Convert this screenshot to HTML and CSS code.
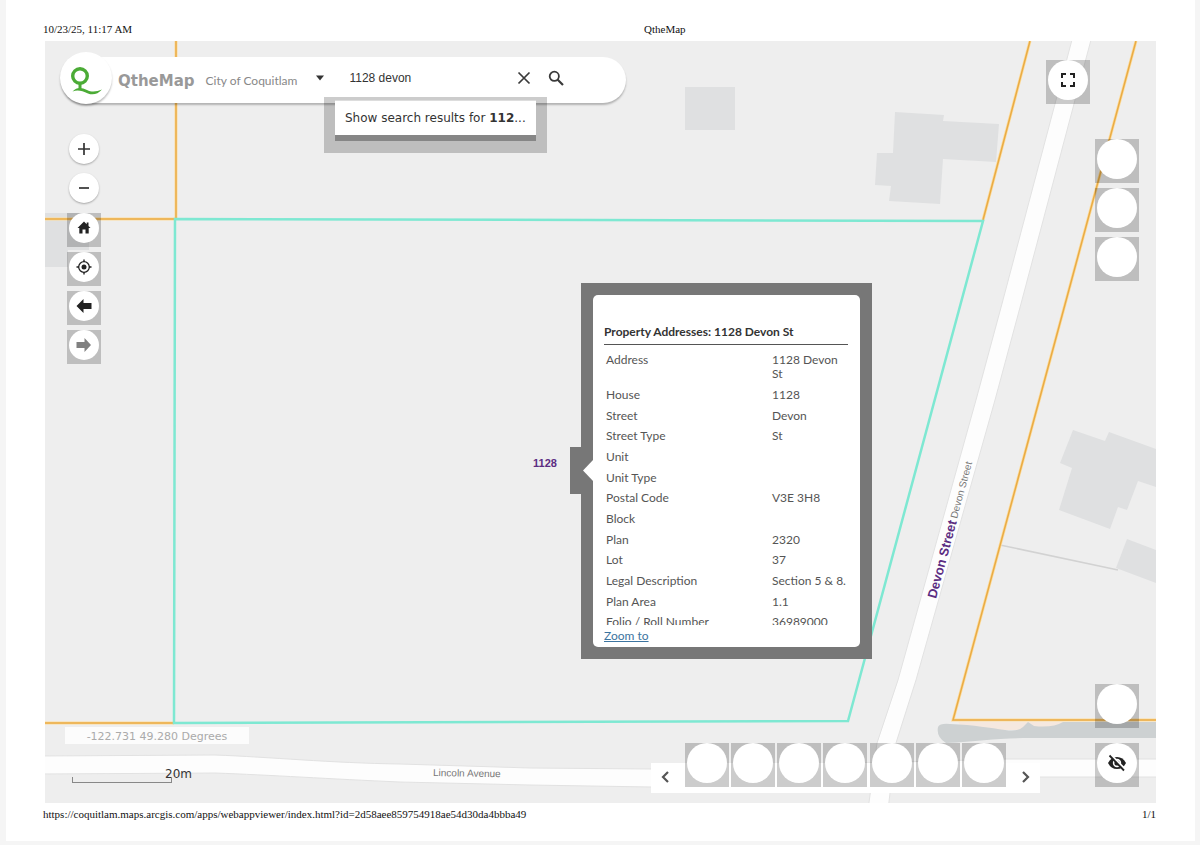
FILE: index.html
```html
<!DOCTYPE html>
<html lang="en">
<head>
<meta charset="utf-8">
<title>QtheMap</title>
<link rel="stylesheet" href="styles.css">
</head>
<body>
<div class="sheet">
  <header class="sheet-head">
    <span class="head-date">10/23/25, 11:17 AM</span>
    <span class="head-title">QtheMap</span>
  </header>

  <main class="map">
    <svg class="map-canvas" viewBox="45 41 1111 762" preserveAspectRatio="xMidYMid slice" role="img" aria-label="Parcel map around 1128 Devon Street">
      <g class="buildings">
        <path d="M685 87H735V130H685Z"/>
        <path d="M895 112L944 115L943 121L999 124L996 162L943 159L940 204L889 201L891 186L875 185L877 153L893 153Z"/>
        <path d="M45 213H89V250H68V267H45Z"/>
        <path d="M1073 430L1105 441L1109 432L1156 449V487L1138 481L1127 510L1118 507L1110 529L1059 510L1072 468L1060 463Z"/>
        <path d="M1127 539L1156 550V583L1116 568Z"/>
      </g>
      <path class="lot-edge" d="M1000 545L1118 570"/>
      <path class="road" d="M40 756L215 755C270 757 330 763 400 764L530 768L651 769L1006 759H1160V777H1006L651 787L530 785L400 782C330 779 270 775 215 773L40 774Z"/>
      <path class="road" d="M1073 36L1003 300L976 400L898 680L877 743L868 810H888L896 743L916 680L995 400L1022 300L1092 36Z"/>
      <path class="bank" d="M958 722H1064L1050 730H965Z"/>
      <path class="water" d="M938 727Q940 723 950 724C975 725 990 728 1005 730Q1018 732 1023 727L1028 722L1034 726Q1053 728 1063 722H1156V738H1030C1000 738 980 741 946 743Q936 737 938 727Z"/>
      <path class="parcel-halo" d="M176 41V218M45 219H175M45 723H174M1030 41L983 220M1136 41L953 720H1156"/>
      <path class="parcel" d="M176 41V218M45 219H175M45 723H174M1030 41L983 220M1136 41L953 720H1156"/>
      <path class="selected" d="M175 219L983 221L848 721L174 723Z"/>
      <text class="label-number" x="533" y="467">1128</text>
      <text class="label-street" transform="translate(936 599) rotate(-75)">Devon Street</text>
      <text class="label-minor" transform="translate(957 519) rotate(-75)">Devon Street</text>
      <text class="label-minor" transform="translate(433 776) rotate(1)">Lincoln Avenue</text>
    </svg>

    <form class="search-bar">
      <span class="logo">
        <svg viewBox="60 53 52 52" aria-hidden="true">
          <circle cx="80" cy="77" r="7.300" fill="none" stroke="#4bab36" stroke-width="3.400"/>
          <path d="M78.500 85H81.500V90H78.500Z" fill="#4bab36"/>
          <path d="M72.500 92.500C77 87.500 82 88.500 87 91C92 93.500 97 92.500 102 90.500C98 95 93 96.500 88 94.500C82 92 78 90.500 72.500 92.500Z" fill="#4bab36"/>
        </svg>
      </span>
      <h1 class="app-name">QtheMap</h1>
      <span class="app-owner">City of Coquitlam</span>
      <button class="bare source" type="button" aria-label="Choose search source">
        <svg width="10" height="6" viewBox="0 0 10 6"><path d="M1 0.500H9L5 5.500Z" fill="#333"/></svg>
      </button>
      <input class="query" type="text" value="1128 devon" aria-label="Find address or place">
      <button class="bare" type="button" aria-label="Clear search">
        <svg width="16" height="16" viewBox="0 0 16 16"><path d="M2.500 2.500L13.500 13.500M13.500 2.500L2.500 13.500" stroke="#3a3a3a" stroke-width="1.700"/></svg>
      </button>
      <button class="bare" type="submit" aria-label="Search">
        <svg width="16" height="16" viewBox="0 0 16 16"><circle cx="6.300" cy="6.300" r="4.600" fill="none" stroke="#3a3a3a" stroke-width="1.800"/><path d="M9.500 9.500L15 15" stroke="#3a3a3a" stroke-width="2.200"/></svg>
      </button>
    </form>

    <div class="suggest">
      <button class="suggest-item" type="button">Show search results for <b>112</b>...</button>
    </div>

    <div class="tools zoom-tools">
      <button class="round" type="button" aria-label="Zoom in"><svg width="14" height="14" viewBox="0 0 14 14"><path d="M7 1V13M1 7H13" stroke="#333" stroke-width="1.700"/></svg></button>
      <button class="round" type="button" aria-label="Zoom out"><svg width="14" height="14" viewBox="0 0 14 14"><path d="M2 7H12" stroke="#333" stroke-width="1.700"/></svg></button>
    </div>

    <div class="tools nav-tools">
      <button class="tile small" type="button" aria-label="Default extent"><span class="disc"><svg width="16" height="16" viewBox="0 0 16 16"><path d="M8 1.500L1.500 8H3.300V13.500H6.500V9.500H9.500V13.500H12.700V8H14.500L12.500 6V2.500H10.700V4.200Z" fill="#222"/></svg></span></button>
      <button class="tile small" type="button" aria-label="My location"><span class="disc"><svg width="16" height="16" viewBox="0 0 16 16"><circle cx="8" cy="8" r="5.300" fill="none" stroke="#222" stroke-width="1.300"/><circle cx="8" cy="8" r="2.500" fill="#222"/><path d="M8 0.500V3M8 13V15.500M0.500 8H3M13 8H15.500" stroke="#222" stroke-width="1.400"/></svg></span></button>
      <button class="tile small" type="button" aria-label="Previous extent"><span class="disc"><svg width="16" height="16" viewBox="0 0 16 16"><path d="M0.500 8L7.500 1V5H15.500V11H7.500V15Z" fill="#222"/></svg></span></button>
      <button class="tile small" type="button" aria-label="Next extent"><span class="disc"><svg width="16" height="16" viewBox="0 0 16 16"><path d="M15 8L8.500 1V5H0.500V11H8.500V15Z" fill="#808080"/></svg></span></button>
    </div>

    <div class="tools full-tools">
      <button class="tile" type="button" aria-label="Full screen"><span class="disc"><svg width="16" height="16" viewBox="0 0 16 16"><path d="M2 6V2H6M10 2H14V6M14 10V14H10M6 14H2V10" fill="none" stroke="#222" stroke-width="2"/></svg></span></button>
    </div>

    <div class="tools side-tools">
      <button class="tile" type="button" aria-label="Side widget 1"><span class="disc"></span></button>
      <button class="tile" type="button" aria-label="Side widget 2"><span class="disc"></span></button>
      <button class="tile" type="button" aria-label="Side widget 3"><span class="disc"></span></button>
    </div>

    <div class="tools corner-tools">
      <button class="tile" type="button" aria-label="Corner widget"><span class="disc"></span></button>
      <button class="tile" type="button" aria-label="Hide widgets"><span class="disc"><svg width="20" height="18" viewBox="0 0 20 18"><path d="M1 9Q4 3 10 3T19 9Q16 15 10 15T1 9Z" fill="#222"/><circle cx="10" cy="9" r="4.200" fill="#fff"/><circle cx="10" cy="9" r="2.600" fill="#222"/><path d="M3.500 0.500L18 15" stroke="#fff" stroke-width="2"/><path d="M2.500 1.500L17 16.500" stroke="#222" stroke-width="1.800"/></svg></span></button>
    </div>

    <div class="dock">
      <button class="bare step" type="button" aria-label="Previous widgets"><svg width="10" height="14" viewBox="0 0 10 14"><path d="M8 2L3 7L8 12" fill="none" stroke="#555" stroke-width="2.200"/></svg></button>
      <div class="dock-tiles">
        <button class="tile" type="button" aria-label="Widget 1"><span class="disc"></span></button>
        <button class="tile" type="button" aria-label="Widget 2"><span class="disc"></span></button>
        <button class="tile" type="button" aria-label="Widget 3"><span class="disc"></span></button>
        <button class="tile" type="button" aria-label="Widget 4"><span class="disc"></span></button>
        <button class="tile" type="button" aria-label="Widget 5"><span class="disc"></span></button>
        <button class="tile" type="button" aria-label="Widget 6"><span class="disc"></span></button>
        <button class="tile" type="button" aria-label="Widget 7"><span class="disc"></span></button>
      </div>
      <button class="bare step" type="button" aria-label="Next widgets"><svg width="10" height="14" viewBox="0 0 10 14"><path d="M2 2L7 7L2 12" fill="none" stroke="#555" stroke-width="2.200"/></svg></button>
    </div>

    <div class="coords">-122.731 49.280 Degrees</div>
    <div class="scale">
      <span class="scale-text">20m</span>
      <span class="scale-line"></span>
    </div>

    <section class="popup">
      <svg class="popup-arrow" width="24" height="47" viewBox="0 0 24 47" aria-hidden="true"><path d="M0 0H12V47H0Z" fill="#777"/><path d="M24 12V35L13 23.500Z" fill="#fff"/></svg>
      <div class="popup-card">
        <h2 class="popup-title">Property Addresses: 1128 Devon St</h2>
        <div class="popup-body">
          <table class="attrs">
            <tr><th scope="row">Address</th><td>1128 Devon St</td></tr>
            <tr><th scope="row">House</th><td>1128</td></tr>
            <tr><th scope="row">Street</th><td>Devon</td></tr>
            <tr><th scope="row">Street Type</th><td>St</td></tr>
            <tr><th scope="row">Unit</th><td></td></tr>
            <tr><th scope="row">Unit Type</th><td></td></tr>
            <tr><th scope="row">Postal Code</th><td>V3E 3H8</td></tr>
            <tr><th scope="row">Block</th><td></td></tr>
            <tr><th scope="row">Plan</th><td>2320</td></tr>
            <tr><th scope="row">Lot</th><td>37</td></tr>
            <tr><th scope="row">Legal Description</th><td>Section 5 &amp; 8.</td></tr>
            <tr><th scope="row">Plan Area</th><td>1.1</td></tr>
            <tr><th scope="row">Folio / Roll Number</th><td>36989000</td></tr>
          </table>
        </div>
        <a class="popup-link" href="#zoom">Zoom to</a>
      </div>
    </section>
  </main>

  <footer class="sheet-foot">
    <span>https://coquitlam.maps.arcgis.com/apps/webappviewer/index.html?id=2d58aee859754918ae54d30da4bbba49</span>
    <span>1/1</span>
  </footer>
</div>
</body>
</html>
```
FILE: styles.css
```css
* { box-sizing: border-box; }

body {
  margin: 0;
  padding: 0 5px 4px 6px;
  min-height: 100vh;
  display: flex;
  background: #f5f5f5;
  font-family: "Liberation Sans", Arial, sans-serif;
  color: #333;
}

button, input { font: inherit; color: inherit; }
button { padding: 0; border: 0; background: none; cursor: pointer; }
svg { display: block; }

.sheet {
  flex: 1;
  display: flex;
  flex-direction: column;
  padding: 0 39px;
  background: #fff;
}

.sheet-head, .sheet-foot {
  font: 11px/14px "Liberation Serif", "Times New Roman", serif;
  color: #111;
  margin: 0 0 0 -2px;
}

.sheet-head {
  display: grid;
  grid-template-columns: 54% 1fr;
  padding: 22px 0 5px;
}

.sheet-foot {
  display: flex;
  justify-content: space-between;
  padding: 4px 0 20px;
}

/* Map */
.map {
  position: relative;
  flex: 1;
  min-height: 640px;
  overflow: hidden;
  background: #eee;
}

.map-canvas {
  position: absolute;
  inset: 0;
  width: 100%;
  height: 100%;
}

.buildings { fill: #dfe0e1; }
.lot-edge { fill: none; stroke: #d2d2d2; stroke-width: 1.5; }
.road { fill: #fdfdfd; stroke: #e2e2e2; stroke-width: 1; }
.water { fill: #cdd1d2; }
.bank { fill: #f5e8df; }
.parcel-halo { fill: none; stroke: #fddc9c; stroke-width: 3; }
.parcel { fill: none; stroke: #e9ab45; stroke-width: 1.5; }
.selected { fill: none; stroke: #7ee8d2; stroke-width: 2.5; }
.label-number { font-size: 11px; font-weight: bold; fill: #5c2d82; }
.label-street { font-size: 13px; font-weight: bold; fill: #5c2d82; }
.label-minor { font-size: 10px; fill: #777; }

/* Search */
.search-bar {
  position: absolute;
  top: 16px;
  left: 17px;
  width: 564px;
  height: 46px;
  display: flex;
  align-items: center;
  padding: 0 54px 4px 0;
  border-radius: 23px;
  background: #fff;
  box-shadow: 0 2px 2px rgba(0, 0, 0, .25);
}

.logo {
  flex: none;
  width: 52px;
  height: 52px;
  margin: 0 6px 0 -2px;
  border-radius: 50%;
  background: #fff;
  box-shadow: 0 2px 2px rgba(0, 0, 0, .25);
}

.app-name {
  margin: 6px 11px 0 0;
  font: bold 15px/20px "DejaVu Sans", Verdana, sans-serif;
  color: #999;
}

.app-owner {
  margin-top: 6px;
  font: 12px/20px Lato, sans-serif;
  color: #888;
}

.bare {
  flex: none;
  width: 32px;
  height: 32px;
  display: grid;
  place-items: center;
}

.source { width: 20px; margin: 0 19px 0 13px; }

.query {
  flex: 1;
  min-width: 0;
  padding: 0;
  border: 0;
  outline: 0;
  background: none;
  font-size: 12px;
}

.suggest {
  position: absolute;
  top: 56px;
  left: 279px;
  width: 223px;
  padding: 3px 11px 12px;
  background: rgba(0, 0, 0, .2);
}

.suggest-item {
  display: block;
  width: 100%;
  border-bottom: 6px solid #868686;
  padding: 8px 10px;
  background: #fff;
  text-align: left;
  white-space: nowrap;
  font: 12px/18px "DejaVu Sans", Verdana, sans-serif;
  border-top: 1px solid #ddd;
}

/* Round map buttons */
.tools {
  position: absolute;
  display: flex;
  flex-direction: column;
  gap: 5px;
}

.round, .disc {
  display: grid;
  place-items: center;
  border-radius: 50%;
  background: #fff;
}

.round {
  width: 30px;
  height: 30px;
  box-shadow: 0 1px 2px rgba(0, 0, 0, .3);
}

.tile {
  flex: none;
  width: 44px;
  height: 44px;
  display: flex;
  justify-content: center;
  align-items: flex-start;
  background: rgba(0, 0, 0, .2);
}

.disc { width: 40px; height: 40px; }
.tile.small { width: 34px; height: 34px; }
.tile.small .disc { width: 30px; height: 30px; }

.zoom-tools { top: 93px; left: 24px; gap: 9px; }
.nav-tools { top: 172px; left: 22px; }
.full-tools { top: 19px; right: 66px; }
.side-tools { top: 98px; right: 17px; }
.corner-tools { bottom: 16px; right: 17px; gap: 15px; }

.dock {
  position: absolute;
  right: 116px;
  bottom: 10px;
  width: 389px;
  height: 30px;
  display: flex;
  align-items: flex-end;
  background: #fff;
}

.dock-tiles {
  flex: 1;
  display: flex;
  justify-content: space-between;
  padding: 0 0 6px;
}

.step { width: 34px; }
.step:first-child { padding-right: 6px; }
.step:last-child { padding-left: 6px; }

.coords {
  position: absolute;
  left: 20px;
  bottom: 59px;
  width: 184px;
  padding-top: 2px;
  background: rgba(255, 255, 255, .8);
  color: #aaa;
  text-align: center;
  font: 11px/15px "DejaVu Sans", Verdana, sans-serif;
}

.scale {
  position: absolute;
  left: 27px;
  bottom: 20px;
  width: 120px;
  display: flex;
  flex-direction: column;
}

.scale-text {
  align-self: flex-end;
  font: 12px/14px "DejaVu Sans", Verdana, sans-serif;
}

.scale-line {
  width: 100px;
  height: 6px;
  margin-top: -4px;
  border: 1px solid #888;
  border-top: 0;
}

/* Popup */
.popup {
  position: absolute;
  top: 242px;
  left: 536px;
  width: 291px;
  padding: 12px;
  background: #777;
  font: 12px/14px Lato, sans-serif;
}

.popup-arrow {
  position: absolute;
  top: 164px;
  left: -11px;
}

.popup-card {
  padding: 28px 12px 3px 11px;
  border-radius: 5px;
  background: #fff;
}

.popup-title {
  margin: 0;
  padding-bottom: 4px;
  border-bottom: 1px solid #555;
  font-size: 12px;
  line-height: 17px;
}

.popup-body {
  height: 280px;
  margin-bottom: 2px;
  padding-top: 5px;
  overflow: hidden;
}

.attrs {
  width: 100%;
  height: 283px;
  border-collapse: collapse;
  table-layout: fixed;
  color: #555;
}

.attrs th, .attrs td {
  padding: 3px 0 3px 2px;
  text-align: left;
  vertical-align: top;
  font-weight: normal;
}

.attrs th { width: 166px; }

.popup-link {
  display: block;
  line-height: 17px;
  color: #3c74a0;
}
```
